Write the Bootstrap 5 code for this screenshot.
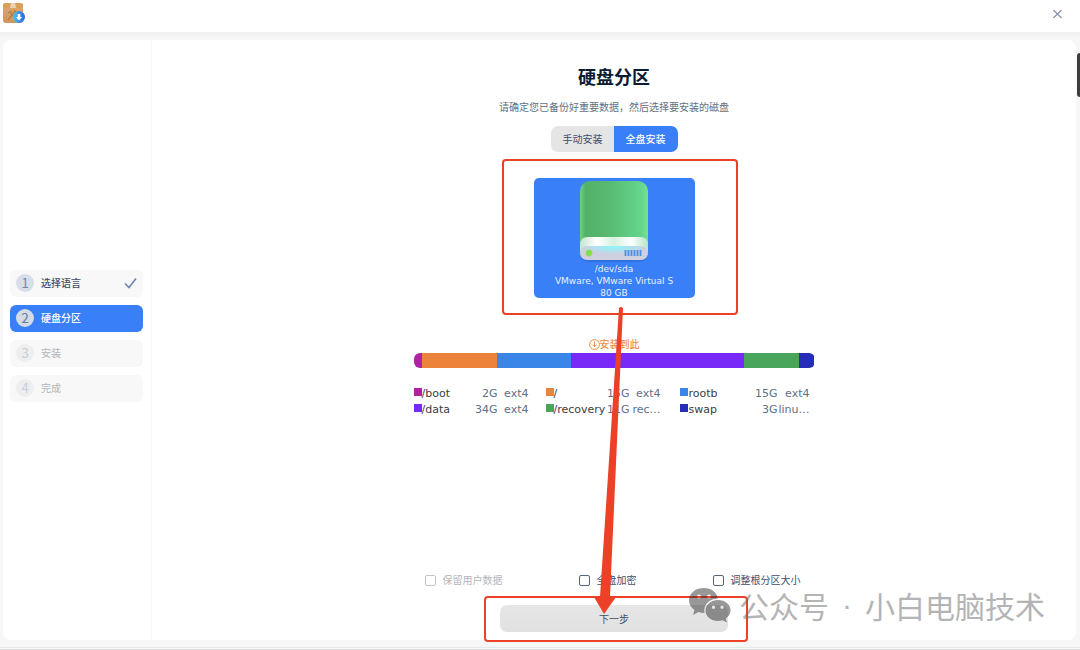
<!DOCTYPE html>
<html lang="zh-CN">
<head>
<meta charset="utf-8">
<meta name="viewport" content="width=device-width, initial-scale=1">
<title>硬盘分区</title>
<link href="https://cdn.jsdelivr.net/npm/bootstrap@5.3.0/dist/css/bootstrap.min.css" rel="stylesheet">
<style>
  body { font-family: "Noto Sans CJK SC", sans-serif; font-size: 10px; line-height: 16px; color: #414d68; background: #f7f7f7; }
  .titlebar { height: 32px; background: #fff; padding: 3px 17px 5px 3px; }
  .close-btn { width: 11px; height: 11px; margin-top: 6px; }
  .frame { padding: 8px 4px 7px 3px; background: linear-gradient(#f0f0f0, #f7f7f7 8px); }
  .panel { background: #fff; border-radius: 8px; }
  .steps { width: 149px; padding: 0 8px 9px 7px; border-right: 1px solid #f5f5f5; gap: 8px; }
  .step { height: 27px; padding: 0 6px; gap: 7px; border-radius: 6px; background: #f8f8f8; color: #414d68; font-weight: 500; text-decoration: none; }
  .step .num { width: 18px; height: 18px; border-radius: 50%; background: #d7dee8; color: #7186ad; font-size: 13px; line-height: 18px; text-align: center; font-weight: 400; }
  .step.active { background: #387ff8; color: #fff; }
  .step.active .num { background: #d3dbe6; color: #667896; }
  .step.pending { color: #b2b5ba; font-weight: 400; }
  .step.pending .num { background: #eee; color: #c3cfdd; }
  .content-area { padding: 24px 0 8px; }
  h1 { font-size: 18px; line-height: 24px; font-weight: 700; color: #0c1a33; margin: 0 0 11px; }
  .hint { color: #5f7085; margin: 0 0 11px; }
  .mode { height: 26px; }
  .mode .btn { width: 64px; padding: 0; font-size: 10px; line-height: 26px; border: 0; border-radius: 7px; background: #e5e5e5; color: #414d68; }
  .mode .btn.active { background: #387ff8; color: #fff; font-weight: 500; }
  .disk { width: 161px; height: 120px; margin-top: 26px; padding: 2px 0 0; border: 0; border-radius: 5px; background: #387ff8; color: #e8f1ff; font: 9px/12px "DejaVu Sans", sans-serif; }
  .target { margin-top: 38px; color: #ed8f3e; font-weight: 500; }
  .parts { width: 401px; height: 15px; margin-top: 1px; border-radius: 6px; }
  .legend { width: 401px; margin-top: 18px; table-layout: fixed; font: 11px/16px "DejaVu Sans", sans-serif; color: #5f7085; }
  .legend td, .legend th { padding: 0; white-space: nowrap; text-align: right; }
  .legend th { text-align: left; font-weight: 400; color: #3c3c3c; }
  .swatch { display: inline-block; width: 8px; height: 8px; vertical-align: 1px; }
  .swatch.rootb, .swatch.swap { margin-right: 1px; }
  .boot { background: #b022a4; } .root { background: #ec833a; } .rootb { background: #3a86e8; }
  .data { background: #7629f7; } .recovery { background: #4aa55c; } .swap { background: #262db8; }
  .options { display: grid; grid-template-columns: 154px 134px 91px; margin-bottom: 17px; }
  .options label { gap: 7px; white-space: nowrap; }
  .options input { appearance: none; width: 11px; height: 11px; margin: 0; border: 1px solid #56657d; border-radius: 2px; background: #fff; }
  .options .off { color: #b2b5ba; }
  .options .off input { border-color: #c0c4ca; }
  .next-btn { width: 228px; height: 27px; padding: 0; border: 0; border-radius: 7px; background: linear-gradient(#e6e6e6, #e1e1e1); color: #414d68; font-size: 10px; line-height: 27px; }
  .marks { top: 0; left: 50%; transform: translateX(-50%); pointer-events: none; }
  .watermark { right: 31px; bottom: 19px; height: 32px; color: #6b6b6b; opacity: .5; font-size: 30px; line-height: 32px; pointer-events: none; }
  .watermark .dot { width: 36px; text-align: center; font-family: "Liberation Sans", sans-serif; }
  .thumb { right: 0; top: 53px; width: 3px; height: 44px; border-radius: 3px 0 0 3px; background: #3d3d3d; }
  .edge { height: 3px; border-top: 1px solid #e9e9e9; border-bottom: 1px solid #e0e0e0; }
</style>
</head>
<body class="vh-100 d-flex flex-column overflow-hidden position-relative">
<header class="titlebar d-flex justify-content-between align-items-start">
  <svg width="24" height="22" viewBox="0 0 24 22" aria-hidden="true">
    <defs>
      <linearGradient id="box" x2="0" y2="1"><stop stop-color="#deaa6c"/><stop offset="1" stop-color="#cf955c"/></linearGradient>
      <linearGradient id="ball"><stop stop-color="#4bc4e8"/><stop offset="1" stop-color="#2b66ea"/></linearGradient>
    </defs>
    <rect width="20" height="20" rx="3" fill="url(#box)"/>
    <path d="M0 5V3Q0 0 3 0H17Q20 0 20 3V5Z" fill="#d9a05c"/>
    <path d="M8 0h4l1 5H7z" fill="#ead3b4"/>
    <path d="M5 17l7-9M7 9l5 7M5 10l4-2M11 7l2 2" stroke="#b08048" stroke-width="1.300" fill="none"/>
    <circle cx="16" cy="14" r="6" fill="url(#ball)"/>
    <path d="M14.700 11h2.600v3H19l-3 3.500-3-3.500h1.700z" fill="#fff"/>
  </svg>
  <button type="button" class="close-btn btn p-0 border-0 d-flex" aria-label="关闭"><svg width="11" height="11" viewBox="0 0 11 11"><path d="M1.500 1l8 8M9.500 1l-8 8" stroke="#8d92ae" stroke-width="1.300"/></svg></button>
</header>

<main class="frame flex-grow-1 d-flex">
  <div class="panel flex-grow-1 d-flex">
    <nav class="steps d-flex flex-column justify-content-center">
      <a href="#" class="step d-flex align-items-center"><span class="num">1</span>选择语言
        <svg class="ms-auto" width="13" height="12" viewBox="0 0 13 12"><path d="M1 6.500l4 4L12 1.500" fill="none" stroke="#6f88b5" stroke-width="1.700"/></svg></a>
      <a href="#" class="step active d-flex align-items-center"><span class="num">2</span>硬盘分区</a>
      <a href="#" class="step pending d-flex align-items-center"><span class="num">3</span>安装</a>
      <a href="#" class="step pending d-flex align-items-center"><span class="num">4</span>完成</a>
    </nav>

    <section class="content-area flex-grow-1 d-flex flex-column align-items-center position-relative">
      <h1>硬盘分区</h1>
      <p class="hint">请确定您已备份好重要数据，然后选择要安装的磁盘</p>
      <div class="mode btn-group">
        <button type="button" class="btn">手动安装</button>
        <button type="button" class="btn active">全盘安装</button>
      </div>

      <button type="button" class="disk d-flex flex-column align-items-center">
        <svg class="flex-shrink-0" width="76" height="83" viewBox="0 0 76 83" aria-hidden="true">
          <defs>
            <linearGradient id="lid"><stop stop-color="#6fd184"/><stop offset=".08" stop-color="#53b26a"/><stop offset=".4" stop-color="#58b870"/><stop offset=".9" stop-color="#65d58d"/><stop offset="1" stop-color="#76e48e"/></linearGradient>
            <linearGradient id="rim"><stop stop-color="#c5e6ce"/><stop offset=".25" stop-color="#fff"/><stop offset=".5" stop-color="#d5f1df"/><stop offset=".75" stop-color="#fff"/><stop offset="1" stop-color="#b7e5c5"/></linearGradient>
            <radialGradient id="face" cx=".5" cy=".1" r=".5"><stop stop-color="#8ff4fb"/><stop offset="1" stop-color="#cfcfe0"/></radialGradient>
          </defs>
          <rect x="4" y="4" width="68" height="78" rx="9" fill="#1e50a8" opacity=".3"/>
          <rect x="4" y="1" width="68" height="76" rx="10" fill="url(#lid)"/>
          <path d="M4 65Q4 57 12 57H64Q72 57 72 65V72H4Z" fill="url(#rim)"/>
          <rect x="4" y="66" width="68" height="14" rx="7" fill="url(#face)"/>
          <circle cx="13" cy="73" r="3.200" fill="#7fe23f" stroke="#a9cf8f" stroke-width=".6"/>
          <path d="M49.500 70v6M52.500 70v6M55.500 70v6M58.500 70v6M61.500 70v6M64.500 70v6" stroke="#4a8ee6" stroke-width="1.800"/>
        </svg>
        <span>/dev/sda</span><span>VMware, VMware Virtual S</span><span>80 GB</span>
      </button>

      <div class="target d-flex align-items-center"><svg width="11" height="11" viewBox="0 0 11 11"><path d="M5.500 2.500v5M3.500 5.700l2 2 2-2" fill="none" stroke="#ed8f3e"/><circle cx="5.500" cy="5.500" r="4.900" fill="none" stroke="#ed8f3e"/></svg>安装到此</div>
      <div class="parts d-flex overflow-hidden">
        <div class="boot" style="width:2%"></div><div class="root" style="width:18.700%"></div><div class="rootb" style="width:18.700%"></div><div class="data" style="width:43.100%"></div><div class="recovery" style="width:13.700%"></div><div class="swap" style="width:3.800%"></div>
      </div>
      <table class="legend">
        <colgroup><col style="width:53px"><col style="width:31px"><col style="width:31px"><col style="width:17px"><col style="width:58px"><col style="width:26px"><col style="width:31px"><col style="width:19px"><col style="width:58px"><col style="width:40px"><col style="width:32px"><col></colgroup>
        <tr><th><i class="swatch boot"></i>/boot</th><td>2G</td><td>ext4</td><td></td><th><i class="swatch root"></i>/</th><td>15G</td><td>ext4</td><td></td><th><i class="swatch rootb"></i>rootb</th><td>15G</td><td>ext4</td><td></td></tr>
        <tr><th><i class="swatch data"></i>/data</th><td>34G</td><td>ext4</td><td></td><th><i class="swatch recovery"></i>/recovery</th><td>11G</td><td>rec…</td><td></td><th><i class="swatch swap"></i>swap</th><td>3G</td><td>linu…</td><td></td></tr>
      </table>

      <div class="options mt-auto">
        <label class="off d-flex align-items-center"><input type="checkbox" disabled>保留用户数据</label>
        <label class="d-flex align-items-center"><input type="checkbox">全盘加密</label>
        <label class="d-flex align-items-center"><input type="checkbox">调整根分区大小</label>
      </div>
      <button type="button" class="next-btn btn">下一步</button>

      <svg class="marks position-absolute" width="268" height="604" viewBox="480 40 268 604" aria-hidden="true">
        <g fill="none" stroke="#ec4127" stroke-width="2"><rect x="503" y="160" width="234" height="154" rx="3"/><rect x="485" y="597" width="262" height="44" rx="3"/></g>
        <path d="M619 308q2-2 4 0L610 597h6L604 614 594 597h6z" fill="#ec4127"/>
      </svg>
      <div class="watermark position-absolute d-flex align-items-center">
        <svg class="me-2" width="43" height="36" viewBox="0 0 43 36"><path fill-rule="evenodd" d="M16 1C7 1 1 6.500 1 13.500c0 4 2 7 5.500 9.500L5 28l5.500-3c2 .6 4 1 6 1C15 18 21 12 30 11.500 28.500 5 23 1 16 1ZM11 7.500a2 2 0 1 1 0 4 2 2 0 0 1 0-4Zm10 0a2 2 0 1 1 0 4 2 2 0 0 1 0-4Z" fill="#333"/><path fill-rule="evenodd" d="M30 13c-7 0-12.500 4.600-12.500 10.500S23 34 30 34c1.500 0 3-.2 4.500-.7L39 35.500l-1.200-4c3-2 4.700-4.800 4.700-8C42.500 17.600 37 13 30 13Zm-4.500 5.500a1.700 1.700 0 1 1 0 3.400 1.700 1.700 0 0 1 0-3.400Zm8.500 0a1.700 1.700 0 1 1 0 3.400 1.700 1.700 0 0 1 0-3.400Z" fill="#333"/></svg>
        <span>公众号</span><span class="dot">·</span><span>小白电脑技术</span>
      </div>
    </section>
  </div>
</main>
<div class="edge"></div>
<div class="thumb position-absolute"></div>
<script src="https://cdn.jsdelivr.net/npm/bootstrap@5.3.0/dist/js/bootstrap.bundle.min.js"></script>
</body>
</html>
